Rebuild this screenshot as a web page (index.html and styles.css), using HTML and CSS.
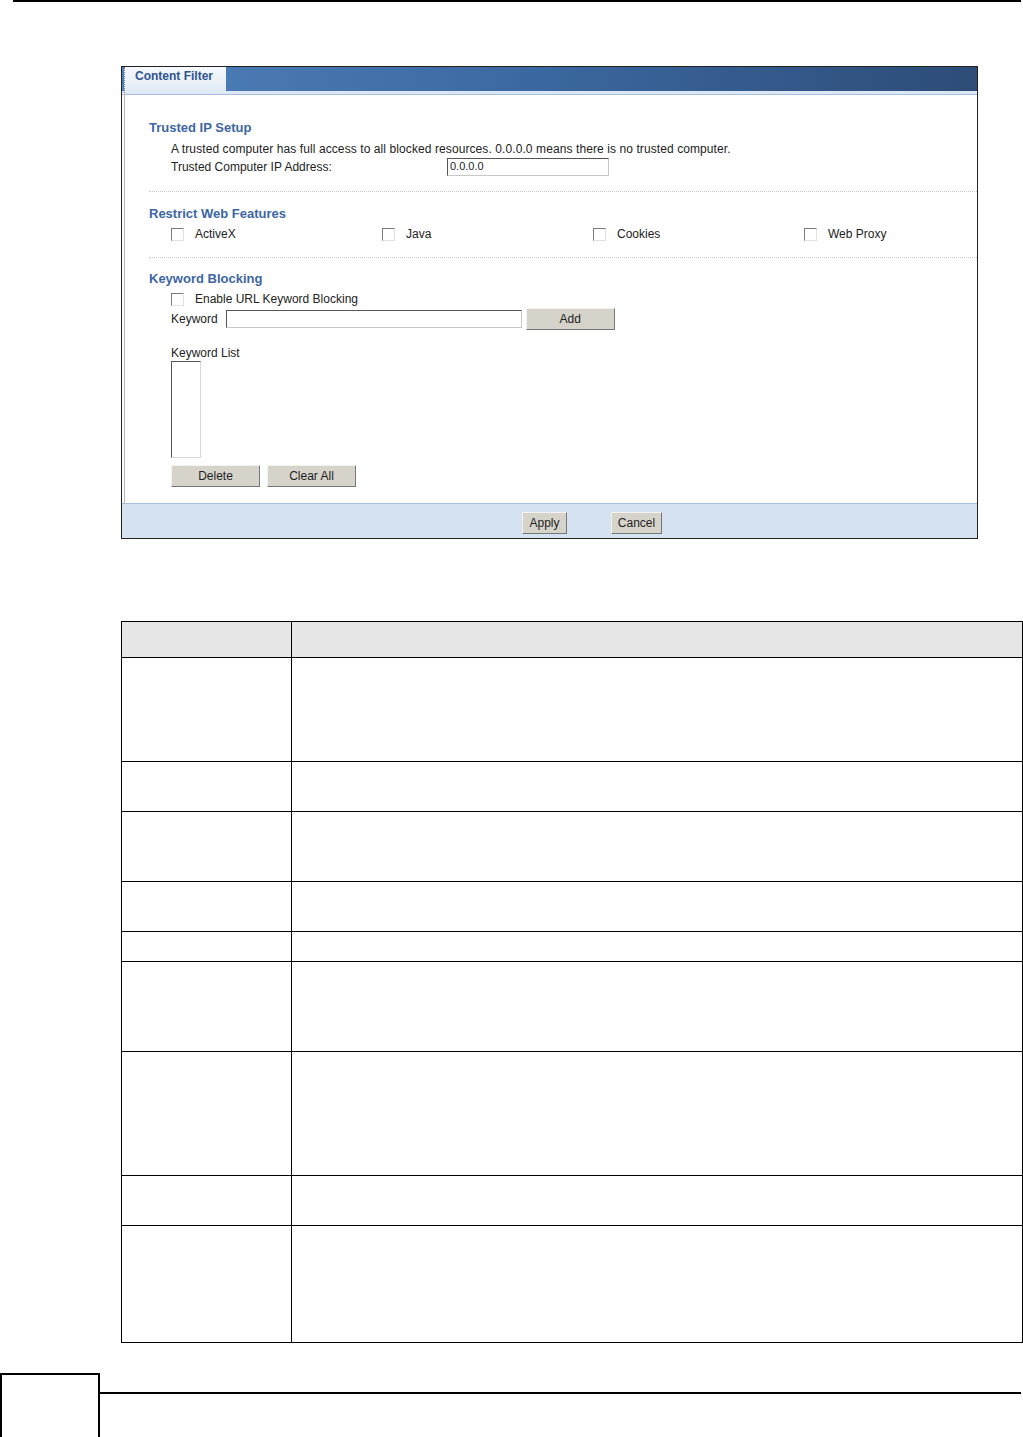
FILE: index.html
```html
<!DOCTYPE html>
<html lang="en">
<head>
    <meta charset="UTF-8">
    <title>Content Filter</title>
    <link rel="stylesheet" href="styles.css">
</head>
<body>
    <div class="top-rule"></div>

    <div class="panel">
        <div class="panel-head">
            <div class="tab">Content Filter</div>
        </div>
        <div class="head-strip"></div>

        <div class="panel-body">
            <div class="section first">
                <div class="sec-title">Trusted IP Setup</div>
                <div class="sec-content">
                    <div class="line desc">A trusted computer has full access to all blocked resources. 0.0.0.0 means there is no trusted computer.</div>
                    <div class="line ip-row">
                        <span class="ip-label">Trusted Computer IP Address:</span>
                        <span class="field ip-field">0.0.0.0</span>
                    </div>
                </div>
            </div>

            <div class="section second">
                <div class="sec-title">Restrict Web Features</div>
                <div class="sec-content">
                    <div class="line features">
                        <label class="feat"><span class="cb"></span>ActiveX</label>
                        <label class="feat"><span class="cb"></span>Java</label>
                        <label class="feat"><span class="cb"></span>Cookies</label>
                        <label class="feat"><span class="cb"></span>Web Proxy</label>
                    </div>
                </div>
            </div>

            <div class="section last">
                <div class="sec-title">Keyword Blocking</div>
                <div class="sec-content">
                    <div class="line enable-row">
                        <label class="feat"><span class="cb"></span>Enable URL Keyword Blocking</label>
                    </div>
                    <div class="keyword-row">
                        <span>Keyword</span>
                        <span class="field kw-field"></span>
                        <button class="btn add-btn">Add</button>
                    </div>
                    <div class="line list-label">Keyword List</div>
                    <div class="list-box"></div>
                    <div class="list-buttons">
                        <button class="btn wide-btn">Delete</button>
                        <button class="btn wide-btn">Clear All</button>
                    </div>
                </div>
            </div>
        </div>

        <div class="panel-foot">
            <button class="btn foot-btn">Apply</button>
            <button class="btn foot-btn cancel">Cancel</button>
        </div>
    </div>

    <table class="desc-table">
        <tr class="head-row"><th class="col-label"></th><th></th></tr>
        <tr class="h104"><td></td><td></td></tr>
        <tr class="h50"><td></td><td></td></tr>
        <tr class="h70"><td></td><td></td></tr>
        <tr class="h50"><td></td><td></td></tr>
        <tr class="h30"><td></td><td></td></tr>
        <tr class="h90"><td></td><td></td></tr>
        <tr class="h124"><td></td><td></td></tr>
        <tr class="h50"><td></td><td></td></tr>
        <tr class="h117"><td></td><td></td></tr>
    </table>

    <div class="page-foot">
        <div class="page-box"></div>
        <div class="page-line"></div>
    </div>
</body>
</html>
```

FILE: styles.css
```css
body {
    margin: 0;
    padding: 0;
    background: white;
    font-family: "Liberation Sans", Arial, sans-serif;
    font-size: 12px;
    color: #222;
}

.top-rule {
    margin-left: 13px;
    width: 1008px;
    height: 2px;
    background: black;
}

/* the screen capture */
.panel {
    margin: 64px 0 0 121px;
    width: 855px;
    border: 1px solid #222;
    background: white;
}
.panel-head {
    display: flex;
    height: 24px;
    background: linear-gradient(to right, #4f80b9, #3a679f 50%, #2e4c77);
}
.tab {
    width: 91px;
    margin-left: 2px;
    padding-left: 10px;
    height: 26px;
    border-left: 1px dotted #777;
    background: linear-gradient(to bottom, #f6f9fd, #dfe9f6);
    color: #2f5591;
    font-weight: bold;
    font-size: 12px;
    line-height: 18px;
}
.head-strip {
    height: 3px;
    background: #dce7f5;
    border-bottom: 1px solid #a7bfdf;
}
.panel-body {
    border-left: 1px solid #b9b9b9;
    margin-left: 2px;
    padding-left: 24px;
}
.section {
    padding-top: 13px;
    border-bottom: 1px dotted #c9c9c9;
    padding-bottom: 14px;
}
.section.first {
    padding-top: 25px;
    padding-bottom: 15px;
}
.section.second {
    padding-top: 14px;
}
.section.last {
    border-bottom: none;
    padding-bottom: 16px;
}
.sec-title {
    height: 16px;
    line-height: 16px;
    font-size: 13px;
    font-weight: bold;
    color: #3d66a3;
}
.sec-content {
    padding-left: 22px;
}
.line {
    height: 18px;
    line-height: 18px;
    white-space: nowrap;
}
.desc {
    margin-top: 5px;
    height: 17px;
    line-height: 17px;
    letter-spacing: 0.09px;
}
.ip-row {
    display: flex;
    align-items: center;
}
.ip-label {
    width: 276px;
}
.field {
    display: inline-block;
    box-sizing: border-box;
    height: 18px;
    line-height: 15px;
    padding-left: 2px;
    border: 1px solid #c8c8c8;
    border-top-color: #555;
    border-left-color: #555;
    background: white;
    font-size: 11px;
}
.ip-field {
    width: 162px;
}
.features {
    margin-top: 3px;
    display: flex;
}
.enable-row {
    margin-top: 3px;
}
.feat {
    display: flex;
    align-items: center;
    flex-shrink: 0;
    width: 211px;
}
.cb {
    display: inline-block;
    box-sizing: border-box;
    width: 13px;
    height: 13px;
    margin-right: 11px;
    border: 1px solid #e2e2e2;
    border-top-color: #7a7a7a;
    border-left-color: #7a7a7a;
    background: white;
}
.keyword-row {
    display: flex;
    align-items: center;
    height: 21px;
}
.kw-field {
    width: 296px;
    margin-left: 8px;
}
.btn {
    box-sizing: border-box;
    height: 22px;
    padding: 0;
    border: 1px solid #777;
    border-top-color: #f4f3ef;
    border-left-color: #f4f3ef;
    background: #d6d3cb;
    font-family: "Liberation Sans", Arial, sans-serif;
    font-size: 12px;
    color: #222;
}
.add-btn {
    width: 89px;
    margin-left: 4px;
}
.list-label {
    margin-top: 16px;
    height: 16px;
    line-height: 16px;
}
.list-box {
    box-sizing: border-box;
    width: 30px;
    height: 97px;
    border: 1px solid #d8d8d8;
    border-top-color: #555;
    border-left-color: #555;
}
.list-buttons {
    margin-top: 7px;
    display: flex;
    gap: 7px;
}
.wide-btn {
    width: 89px;
}
.panel-foot {
    height: 35px;
    box-sizing: border-box;
    border-top: 1px solid #a9c1df;
    background: #d5e2f2;
    padding: 8px 0 0 400px;
    display: flex;
    align-items: flex-start;
    gap: 44px;
}
.foot-btn {
    width: 45px;
}
.foot-btn.cancel {
    width: 51px;
}

/* field description table */
.desc-table {
    margin: 82px 0 0 121px;
    width: 902px;
    border-collapse: collapse;
}
.desc-table th, .desc-table td {
    border: 1px solid black;
    padding: 0;
}
.desc-table .col-label {
    width: 169px;
}
.head-row {
    height: 36px;
    background: #e6e6e6;
}
.h30 { height: 30px; }
.h50 { height: 50px; }
.h70 { height: 70px; }
.h90 { height: 90px; }
.h104 { height: 104px; }
.h117 { height: 117px; }
.h124 { height: 124px; }

.page-foot {
    margin-top: 30px;
    display: flex;
    align-items: flex-start;
}
.page-box {
    width: 96px;
    height: 70px;
    border: 2px solid black;
}
.page-line {
    margin-top: 19px;
    width: 921px;
    height: 2px;
    background: black;
}
```
